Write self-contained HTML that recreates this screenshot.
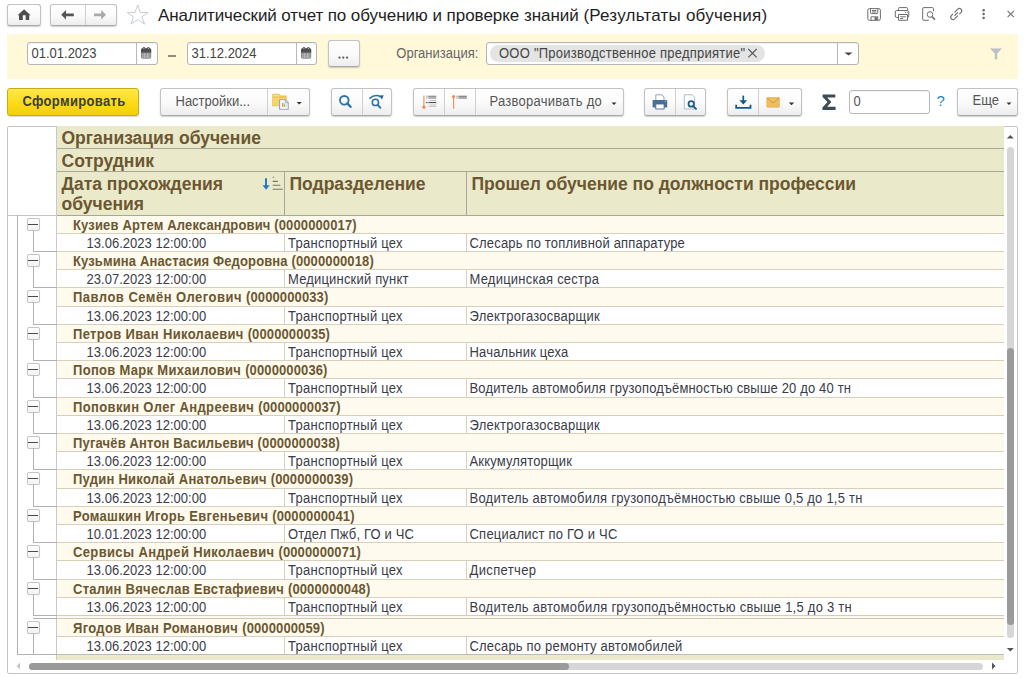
<!DOCTYPE html>
<html><head><meta charset="utf-8">
<style>
*{box-sizing:border-box;margin:0;padding:0}
html,body{width:1024px;height:679px;overflow:hidden;background:#fff;font-family:"Liberation Sans",sans-serif;color:#333;position:relative}
.a{position:absolute}
svg{position:absolute;overflow:visible}
.btn{position:absolute;border:1px solid #c2c2c2;border-bottom-color:#a9a9a9;border-radius:3px;background:linear-gradient(#ffffff 0%,#fbfbfb 50%,#ededed 100%);box-shadow:0 1px 1.5px rgba(0,0,0,.2)}
.dv{position:absolute;top:0;bottom:0;width:1px;background:#cfcfcf}
.inp{position:absolute;border:1px solid #b4b4b4;border-radius:3px;background:#fff;box-shadow:inset 0 1px 1px rgba(0,0,0,.06)}
.t{position:absolute;white-space:nowrap;line-height:1}
.t[style*="font-size:13px"]{transform:scaleY(1.08);transform-origin:0 60%}
#title{left:158px;top:7px;font-size:17px;color:#1e1e1e}
#band{left:7px;top:34px;width:1011px;height:45px;background:#fff9d9}
/* table */
#tbl{left:7px;top:126px;width:1011px;height:548px;border:1px solid #c4c4c4;border-radius:2px;background:#fff}
#hdr{left:57px;top:126px;width:947px;height:89px;background:#eae9ca}
.hl{position:absolute;height:1px;background:#a9a79a}
.ht{position:absolute;white-space:nowrap;font-weight:bold;font-size:17.5px;color:#6b5731;line-height:20px}
.gr{position:absolute;left:57px;width:947px;background:#fffaee;border-top:1px solid #d9cfbb}
.dr{position:absolute;left:57px;width:947px;background:#fff;border-top:1px solid #d9cfbb}
.gt{position:absolute;left:16px;top:2.6px;transform:scaleY(1.08);transform-origin:0 11px;white-space:nowrap;font-weight:bold;font-size:13px;letter-spacing:.12px;color:#6b5731;line-height:14px}
.dr span{position:absolute;top:3px;transform:scaleY(1.08);transform-origin:0 11px;white-space:nowrap;font-size:13px;letter-spacing:.12px;color:#3c3c46;line-height:14px}
.dr .c1{left:29.5px}
.dr .c2{left:231px}
.dr .c3{left:412.5px}
.dr:before{content:"";position:absolute;left:227px;top:-1px;bottom:0;width:1px;background:#d9cfbb}
.dr:after{content:"";position:absolute;left:409px;top:-1px;bottom:0;width:1px;background:#d9cfbb}
.tb{position:absolute;left:26.5px;width:13px;height:13px;border:1px solid #c4c4c4;border-radius:2px;background:linear-gradient(#fff,#f3f3f3);box-shadow:0 0 1px rgba(0,0,0,.15)}
.tb:after{content:"";position:absolute;left:0.5px;right:0.5px;top:5px;height:1px;background:#4a4a4a}
.tv{position:absolute;left:33px;width:1px;background:#b2b2b2}
.th{position:absolute;left:33px;width:24px;height:1px;background:#b2b2b2}
</style></head><body>
<!-- ===== top bar ===== -->
<div class="btn" style="left:7px;top:4px;width:34px;height:22px">
 <svg width="34" height="23" style="left:-1px;top:-5px"><path d="M17.1 9.3 L23.6 15.3 L22.2 15.3 L22.2 19.9 L18.7 19.9 L18.7 15.3 L15.8 15.3 L15.8 19.9 L12 19.9 L12 15.3 L10.6 15.3 Z" fill="#4f4f4f"/></svg>
</div>
<div class="btn" style="left:50px;top:4px;width:67px;height:22px">
 <div class="dv" style="left:33.5px"></div>
 <svg width="67" height="23" style="left:-1px;top:-5px"><path d="M11.2 14.8 L16 10.1 L16 13.5 L23.8 13.5 L23.8 16.2 L16 16.2 L16 19.5 Z" fill="#555"/><path d="M56 14.8 L51.2 10.1 L51.2 13.5 L44 13.5 L44 16.2 L51.2 16.2 L51.2 19.5 Z" fill="#aaa"/></svg>
</div>
<svg width="24" height="24" style="left:126px;top:3px"><path d="M11.7 1.9 L14.3 9.4 L22.1 9.4 L15.9 13.9 L18.6 21.1 L11.7 16.6 L4.9 21.1 L7.4 13.9 L1.3 9.4 L9 9.4 Z" fill="none" stroke="#c5c9ce" stroke-width="0.95" stroke-linejoin="miter"/></svg>
<div class="t" id="title"><span style="letter-spacing:-0.11px">Аналитический отчет по </span><span style="letter-spacing:-0.04px">обучению и проверке знаний </span><span style="letter-spacing:0.22px">(Результаты обучения)</span></div>

<!-- top right icons -->
<svg width="160" height="30" style="left:862px;top:0">
 <g fill="none" stroke="#6e6e6e" stroke-width="1">
  <rect x="5.8" y="8.6" width="12.6" height="11.7" rx="1.6"/>
  <path d="M8.5 8.6 V12.8 Q8.5 13.6 9.3 13.6 H15 Q15.8 13.6 15.8 12.8 V8.6"/>
  <path d="M10 10.5 H14.4 M10 12 H14.4"/>
  <path d="M9 20.3 V16.8 H15.8 V20.3"/>
 </g>
 <rect x="12.5" y="17.2" width="2.8" height="3" fill="#6e6e6e"/>
 <g fill="none" stroke="#6e6e6e" stroke-width="1">
  <path d="M36.5 10.5 V8.4 Q36.5 7.6 37.3 7.6 H44.7 Q45.5 7.6 45.5 8.4 V10.5"/>
  <path d="M36.5 17.5 H34.8 Q33.3 17.5 33.3 16 V12 Q33.3 10.5 34.8 10.5 H45.3 Q46.8 10.5 46.8 12 V16 Q46.8 17.5 45.3 17.5 H45.5"/>
  <path d="M36.5 20.3 V14.5 H45.5 V20.3 Z"/>
  <path d="M38.2 16.8 H43.8 M38.2 18.6 H41.2"/>
 </g>
 <path d="M42.8 12.3 H44 M44.8 12.3 H45.8" stroke="#6e6e6e" stroke-width="1"/>
 <g fill="none" stroke="#6e6e6e" stroke-width="1">
  <path d="M66.8 20.3 H61.8 Q60.7 20.3 60.7 19.2 V8.7 Q60.7 7.6 61.8 7.6 H70.4 Q71.5 7.6 71.5 8.7 V11.2"/>
  <circle cx="68" cy="14.5" r="2.8"/>
  <path d="M70 16.6 L73 19.6" stroke-width="1.5"/>
 </g>
 <g fill="none" stroke="#6e6e6e" stroke-width="1.15" stroke-linecap="round">
  <path d="M92.79 12.16 L95.83 9.12 A2.3 2.3 0 0 1 99.08 12.37 L97.66 13.79"/>
  <path d="M95.61 15.84 L92.57 18.88 A2.3 2.3 0 0 1 89.32 15.63 L90.74 14.21"/>
  <path d="M92.79 15.41 L95.61 12.59"/>
 </g>
 <circle cx="121.6" cy="10.3" r="1.25" fill="#666"/><circle cx="121.6" cy="14.1" r="1.25" fill="#666"/><circle cx="121.6" cy="17.9" r="1.25" fill="#666"/>
 <path d="M145.6 11 L151.9 17.1 M151.9 11 L145.6 17.1" stroke="#777" stroke-width="1.1"/>
</svg>

<!-- ===== filter band ===== -->
<div class="a" id="band"></div>
<div class="inp" style="left:27px;top:42px;width:131px;height:23px">
 <div class="dv" style="left:108px;background:#b9b9b9"></div>
 <div class="t" style="left:3.5px;top:3.5px;font-size:13px;color:#444">01.01.2023</div>
 <svg width="20" height="20" style="left:112.4px;top:3px"><rect x="1" y="2.2" width="10.2" height="10.6" rx="1.8" fill="#8c8c8c"/><path d="M1 6.4 V4 Q1 2.2 2.8 2.2 H9.4 Q11.2 2.2 11.2 4 V6.4 Z" fill="#505050"/><circle cx="3.9" cy="2.3" r="1.3" fill="#505050"/><circle cx="8.3" cy="2.3" r="1.3" fill="#505050"/><path d="M2 8.8 H10.2 M2 10.9 H10.2 M4.4 7 V12.4 M7.8 7 V12.4" stroke="#d0d0d0" stroke-width=".6"/><path d="M3.9 1.6 V3 M8.3 1.6 V3" stroke="#e0e0e0" stroke-width=".7"/></svg>
</div>
<div class="a" style="left:168px;top:55px;width:8px;height:2px;background:#8f8d7c"></div>
<div class="inp" style="left:187px;top:42px;width:130px;height:23px">
 <div class="dv" style="left:108px;background:#b9b9b9"></div>
 <div class="t" style="left:3.5px;top:3.5px;font-size:13px;color:#444">31.12.2024</div>
 <svg width="20" height="20" style="left:112.4px;top:3px"><rect x="1" y="2.2" width="10.2" height="10.6" rx="1.8" fill="#8c8c8c"/><path d="M1 6.4 V4 Q1 2.2 2.8 2.2 H9.4 Q11.2 2.2 11.2 4 V6.4 Z" fill="#505050"/><circle cx="3.9" cy="2.3" r="1.3" fill="#505050"/><circle cx="8.3" cy="2.3" r="1.3" fill="#505050"/><path d="M2 8.8 H10.2 M2 10.9 H10.2 M4.4 7 V12.4 M7.8 7 V12.4" stroke="#d0d0d0" stroke-width=".6"/><path d="M3.9 1.6 V3 M8.3 1.6 V3" stroke="#e0e0e0" stroke-width=".7"/></svg>
</div>
<div class="btn" style="left:328px;top:40px;width:32px;height:27px">
 <svg width="31" height="27" style="left:-1px;top:-1px"><circle cx="11.5" cy="17.6" r="1.1" fill="#555"/><circle cx="15.3" cy="17.6" r="1.1" fill="#555"/><circle cx="19.1" cy="17.6" r="1.1" fill="#555"/></svg>
</div>
<div class="t" style="left:396.3px;top:46.5px;font-size:13px;color:#666">Организация:</div>
<div class="inp" style="left:486px;top:42px;width:373px;height:23px">
 <div class="a" style="left:3px;top:2.4px;width:275px;height:16.6px;border-radius:8.3px;background:#e4e4e4"></div>
 <div class="t" style="left:12px;top:4px;font-size:13px;letter-spacing:.24px;color:#444">ООО "Производственное предприятие"</div>
 <svg width="12" height="12" style="left:260.2px;top:4px"><path d="M1.3 2 L9.7 10.3 M9.7 2 L1.3 10.3" stroke="#555" stroke-width="1.1"/></svg>
 <div class="dv" style="left:350px;background:#b9b9b9"></div>
 <svg width="10" height="6" style="left:357px;top:9px"><path d="M0.5 0.5 H8.5 L4.5 3.5 Z" fill="#444"/></svg>
</div>
<svg width="14" height="14" style="left:989px;top:47px"><path d="M1 1.5 H13 L8.2 6.6 V11.6 Q8.2 12.6 7 12.6 Q5.8 12.6 5.8 11.6 V6.6 Z" fill="#b8c0c8"/></svg>

<!-- ===== toolbar ===== -->
<div class="a" style="left:7px;top:88px;width:132px;height:28px;border:1px solid #c9ab12;border-radius:3px;background:linear-gradient(#fee84b 0%,#fcdb16 55%,#f3cf0b 100%);box-shadow:0 1px 1px rgba(0,0,0,.15)">
 <div class="t" style="left:14.5px;top:5.5px;font-size:13px;font-weight:bold;letter-spacing:.33px;color:#3e3e3e">Сформировать</div>
</div>
<div class="btn" style="left:160px;top:88px;width:150px;height:28px">
 <div class="t" style="left:14.5px;top:5.5px;font-size:13px;color:#555">Настройки...</div>
 <div class="dv" style="left:105.5px"></div>
 <svg width="149" height="27" style="left:-1px;top:-1px">
  <path d="M112.2 7 Q112.2 5.7 113.5 5.7 H118.4 Q119.4 5.7 120 6.6 L120.6 7.6 H125.6 Q126.8 7.6 126.8 8.8 V18.2 H112.2 Z" fill="#eebf52"/>
  <path d="M112.8 9.6 H126.2 V17.6 H112.8 Z" fill="#f7d36c"/>
  <path d="M113 6.8 H119 L119.8 8.6 H113 Z" fill="#fbe18a"/>
  <path d="M119.6 11.8 H125.4 L128.2 14.6 V21.2 H119.6 Z" fill="#fff" stroke="#98a4b4" stroke-width="1.1"/>
  <path d="M125.2 11.8 V14.8 H128.2" fill="#dfe3ea" stroke="#98a4b4" stroke-width=".8"/>
  <path d="M122.8 19 V14.8" stroke="#ee6b6b" stroke-width="1.2"/><path d="M124.6 19 V15.6" stroke="#7fcf7f" stroke-width="1.2"/><path d="M126.1 19 V16.2" stroke="#bfe8b0" stroke-width=".9"/>
  <path d="M136.6 14 H141.8 L139.2 16.6 Z" fill="#333"/>
 </svg>
</div>
<div class="btn" style="left:331px;top:88px;width:61px;height:28px">
 <div class="dv" style="left:29.5px"></div>
 <svg width="61" height="27" style="left:-1px;top:-1px">
  <circle cx="13.3" cy="12.3" r="4.3" fill="none" stroke="#2c72ab" stroke-width="1.9"/>
  <path d="M16.3 15.4 L19.6 18.8" stroke="#2c72ab" stroke-width="2.3" stroke-linecap="round"/>
  <path d="M38.4 10.6 Q44.2 5.6 49.6 8.9" fill="none" stroke="#2c72ab" stroke-width="1.4"/>
  <path d="M48.2 7.4 L52.6 7.2 L51 11.6 Z" fill="#1d5f98"/>
  <circle cx="44.4" cy="14.4" r="3.1" fill="none" stroke="#2c72ab" stroke-width="1.6"/>
  <path d="M46.8 16.9 L49.4 19.8" stroke="#2c72ab" stroke-width="1.9" stroke-linecap="round"/>
 </svg>
</div>
<div class="btn" style="left:413px;top:88px;width:211px;height:28px">
 <div class="dv" style="left:30px"></div>
 <div class="dv" style="left:61px"></div>
 <svg width="70" height="27" style="left:-1px;top:-1px">
  <path d="M10.9 7.4 V19" stroke="#f58a4f" stroke-width="1.1"/><circle cx="10.9" cy="19.2" r="1.6" fill="#f58a4f"/>
  <path d="M13.5 8.2 H14.5 M15.3 8.2 H23.3 M13.5 10 H14.5 M15.3 10 H23.3" stroke="#707070" stroke-width="1.1"/>
  <path d="M15.5 12.5 H16.3 M17 12.5 H23.3" stroke="#b0b0b0" stroke-width=".8"/>
  <path d="M13 14.6 H14.6 M15.4 14.6 H23.3" stroke="#3b3b3b" stroke-width="1"/>
  <path d="M15.5 17 H16.3 M17 17 H23.3 M15.5 18.4 H23.3" stroke="#b8b8b8" stroke-width=".8"/>
  <path d="M40.6 9.4 V20.8" stroke="#f58a4f" stroke-width="1.1"/><circle cx="40.6" cy="8.6" r="1.6" fill="#f58a4f"/>
  <path d="M43.6 8.2 H44.6 M45.4 8.2 H53.8 M43.6 10 H44.6 M45.4 10 H53.8" stroke="#606060" stroke-width="1.1"/>
 </svg>
 <div class="t" style="left:75.5px;top:5.5px;font-size:13px;letter-spacing:.26px;color:#555">Разворачивать до</div>
 <svg width="10" height="6" style="left:197px;top:12.5px"><path d="M0.5 0.5 H5.5 L3 3 Z" fill="#333"/></svg>
</div>
<div class="btn" style="left:644px;top:88px;width:62px;height:28px">
 <div class="dv" style="left:30px"></div>
 <svg width="62" height="27" style="left:-1px;top:-1px">
  <path d="M11.8 6.8 H17.8 L20 9 V12.6 H11.8 Z" fill="#fff" stroke="#8a9bb0" stroke-width=".9"/>
  <path d="M8.6 12.4 Q8.6 12 9.2 12 H22.6 Q23.2 12 23.2 12.6 V19 Q23.2 19.4 22.6 19.4 H9.2 Q8.6 19.4 8.6 19 Z" fill="#4a6e94"/>
  <rect x="11.8" y="16" width="8.3" height="5" fill="#fff" stroke="#4a6e94" stroke-width=".9"/>
  <path d="M20.8 13.4 H22" stroke="#cfe" stroke-width=".7"/>
  <path d="M40.3 6.8 H48 L50.6 9.4 V21 H40.3 Z" fill="#fff" stroke="#a9b4c0" stroke-width=".9"/>
  <circle cx="47.2" cy="15.9" r="2.7" fill="#fff" stroke="#1c5d8c" stroke-width="1.8"/>
  <path d="M49.2 18.1 L52 20.9" stroke="#1c5d8c" stroke-width="2" stroke-linecap="round"/>
 </svg>
</div>
<div class="btn" style="left:727px;top:88px;width:75px;height:28px">
 <div class="dv" style="left:30px"></div>
 <svg width="75" height="27" style="left:-1px;top:-1px">
  <path d="M16.3 7.6 V13" stroke="#0f5a8c" stroke-width="1.7"/>
  <path d="M12.4 12.3 H20.2 L16.3 16.6 Z" fill="#0f5a8c"/>
  <path d="M9.2 16.8 V19.8 H23.5 V16.8" fill="none" stroke="#0f5a8c" stroke-width="1.8"/>
  <rect x="39.8" y="9.6" width="12.6" height="9.6" rx="1" fill="#f0c060" stroke="#d9a640" stroke-width=".6"/>
  <path d="M39.9 9.8 L46.1 15 L52.3 9.8" fill="none" stroke="#c8913a" stroke-width=".9"/>
  <path d="M39.9 19.1 L44.6 14 M52.3 19.1 L47.6 14" fill="none" stroke="#e8b050" stroke-width=".6"/>
  <path d="M61.8 14.6 H67.2 L64.5 17.2 Z" fill="#333"/>
 </svg>
</div>
<svg width="16" height="18" style="left:821px;top:93px"><path d="M1.6 1.6 H14.3 V4.4 H6.1 L10.4 9.1 L6.1 13.8 H14.6 V16.9 H1.4 V14.6 L6.5 9.1 L1.6 3.9 Z" fill="#3d4b59"/></svg>
<div class="inp" style="left:849px;top:90px;width:81px;height:24px;border-color:#b9b9b9">
 <div class="t" style="left:3.5px;top:3.5px;font-size:13px;color:#555">0</div>
</div>
<div class="t" style="left:936.5px;top:93px;font-size:15px;color:#2d82c8">?</div>
<div class="btn" style="left:957px;top:88px;width:61px;height:28px">
 <div class="t" style="left:14.5px;top:5px;font-size:13px;color:#555">Еще</div>
 <svg width="10" height="6" style="left:47.5px;top:12.5px"><path d="M0.5 0.5 H5.5 L3 3 Z" fill="#333"/></svg>
</div>

<!-- ===== table ===== -->
<div class="a" id="tbl"></div>
<div class="a" id="hdr"></div>
<div class="hl" style="left:57px;top:148px;width:947px"></div>
<div class="hl" style="left:57px;top:171px;width:947px"></div>
<div class="a" style="left:284px;top:171px;width:1px;height:44px;background:#a9a79a"></div>
<div class="a" style="left:466px;top:171px;width:1px;height:44px;background:#a9a79a"></div>
<div class="ht" style="left:61.5px;top:128px">Организация обучение</div>
<div class="ht" style="left:61.5px;top:151px">Сотрудник</div>
<div class="ht" style="left:61.5px;top:173.5px">Дата прохождения<br>обучения</div>
<div class="ht" style="left:289.5px;top:173.5px">Подразделение</div>
<div class="ht" style="left:471.5px;top:173.5px">Прошел обучение по должности профессии</div>
<svg width="24" height="18" style="left:261px;top:175px">
 <path d="M5 3.2 V10.7" stroke="#1f78c1" stroke-width="1.9"/><path d="M1.6 10.3 H8.6 L5.1 14.8 Z" fill="#1f78c1"/>
 <path d="M11.7 2.2 H13.2 M11.7 6.4 H16.8 M11.7 10.3 H19.3 M11.7 14.2 H21.8" stroke="#78776a" stroke-width="1.1"/>
</svg>

<div class="gr" style="top:215.0px;height:18.0px"><span class="gt"><span style="letter-spacing:0.164px">Кузиев Артем Александрович </span>(0000000017)</span></div>
<div class="dr" style="top:233.0px;height:18.0px"><span class="c1" style="letter-spacing:.025px">13.06.2023 12:00:00</span><span class="c2" style="letter-spacing:0.26px">Транспортный цех</span><span class="c3" style="letter-spacing:0.172px">Слесарь по топливной аппаратуре</span></div>
<div class="gr" style="top:251.0px;height:18.0px"><span class="gt"><span style="letter-spacing:0.134px">Кузьмина Анастасия Федоровна </span>(0000000018)</span></div>
<div class="dr" style="top:269.0px;height:18.0px"><span class="c1" style="letter-spacing:.025px">23.07.2023 12:00:00</span><span class="c2" style="letter-spacing:0.18px">Медицинский пункт</span><span class="c3" style="letter-spacing:0.220px">Медицинская сестра</span></div>
<div class="gr" style="top:287.0px;height:19.0px"><span class="gt"><span style="letter-spacing:0.484px">Павлов Семён Олегович </span>(0000000033)</span></div>
<div class="dr" style="top:306.0px;height:18.0px"><span class="c1" style="letter-spacing:.025px">13.06.2023 12:00:00</span><span class="c2" style="letter-spacing:0.26px">Транспортный цех</span><span class="c3" style="letter-spacing:0.253px">Электрогазосварщик</span></div>
<div class="gr" style="top:324.0px;height:18.0px"><span class="gt"><span style="letter-spacing:0.320px">Петров Иван Николаевич </span>(0000000035)</span></div>
<div class="dr" style="top:342.0px;height:18.0px"><span class="c1" style="letter-spacing:.025px">13.06.2023 12:00:00</span><span class="c2" style="letter-spacing:0.26px">Транспортный цех</span><span class="c3" style="letter-spacing:0.191px">Начальник цеха</span></div>
<div class="gr" style="top:360.0px;height:18.0px"><span class="gt"><span style="letter-spacing:0.306px">Попов Марк Михаилович </span>(0000000036)</span></div>
<div class="dr" style="top:378.0px;height:19.0px"><span class="c1" style="letter-spacing:.025px">13.06.2023 12:00:00</span><span class="c2" style="letter-spacing:0.26px">Транспортный цех</span><span class="c3" style="letter-spacing:0.162px">Водитель автомобиля грузоподъёмностью свыше 20 до 40 тн</span></div>
<div class="gr" style="top:397.0px;height:18.0px"><span class="gt"><span style="letter-spacing:0.370px">Поповкин Олег Андреевич </span>(0000000037)</span></div>
<div class="dr" style="top:415.0px;height:18.0px"><span class="c1" style="letter-spacing:.025px">13.06.2023 12:00:00</span><span class="c2" style="letter-spacing:0.26px">Транспортный цех</span><span class="c3" style="letter-spacing:0.253px">Электрогазосварщик</span></div>
<div class="gr" style="top:433.0px;height:18.0px"><span class="gt"><span style="letter-spacing:0.160px">Пугачёв Антон Васильевич </span>(0000000038)</span></div>
<div class="dr" style="top:451.0px;height:18.0px"><span class="c1" style="letter-spacing:.025px">13.06.2023 12:00:00</span><span class="c2" style="letter-spacing:0.26px">Транспортный цех</span><span class="c3" style="letter-spacing:0.156px">Аккумуляторщик</span></div>
<div class="gr" style="top:469.0px;height:19.0px"><span class="gt"><span style="letter-spacing:0.247px">Пудин Николай Анатольевич </span>(0000000039)</span></div>
<div class="dr" style="top:488.0px;height:18.0px"><span class="c1" style="letter-spacing:.025px">13.06.2023 12:00:00</span><span class="c2" style="letter-spacing:0.26px">Транспортный цех</span><span class="c3" style="letter-spacing:0.231px">Водитель автомобиля грузоподъёмностью свыше 0,5 до 1,5 тн</span></div>
<div class="gr" style="top:506.0px;height:18.0px"><span class="gt"><span style="letter-spacing:0.308px">Ромашкин Игорь Евгеньевич </span>(0000000041)</span></div>
<div class="dr" style="top:524.0px;height:18.0px"><span class="c1" style="letter-spacing:.025px">10.01.2023 12:00:00</span><span class="c2" style="letter-spacing:0.17px">Отдел Пжб, ГО и ЧС</span><span class="c3" style="letter-spacing:0.225px">Специалист по ГО и ЧС</span></div>
<div class="gr" style="top:542.0px;height:18.0px"><span class="gt"><span style="letter-spacing:0.366px">Сервисы Андрей Николаевич </span>(0000000071)</span></div>
<div class="dr" style="top:560.0px;height:19.0px"><span class="c1" style="letter-spacing:.025px">13.06.2023 12:00:00</span><span class="c2" style="letter-spacing:0.26px">Транспортный цех</span><span class="c3" style="letter-spacing:0.376px">Диспетчер</span></div>
<div class="gr" style="top:579.0px;height:18.0px"><span class="gt"><span style="letter-spacing:0.266px">Сталин Вячеслав Евстафиевич </span>(0000000048)</span></div>
<div class="dr" style="top:597.0px;height:18.0px"><span class="c1" style="letter-spacing:.025px">13.06.2023 12:00:00</span><span class="c2" style="letter-spacing:0.26px">Транспортный цех</span><span class="c3" style="letter-spacing:0.242px">Водитель автомобиля грузоподъёмностью свыше 1,5 до 3 тн</span></div>
<div class="gr" style="top:618.0px;height:18.0px"><span class="gt"><span style="letter-spacing:0.338px">Ягодов Иван Романович </span>(0000000059)</span></div>
<div class="dr" style="top:636.0px;height:18.0px"><span class="c1" style="letter-spacing:.025px">13.06.2023 12:00:00</span><span class="c2" style="letter-spacing:0.26px">Транспортный цех</span><span class="c3" style="letter-spacing:0.193px">Слесарь по ремонту автомобилей</span></div>
<div class="hl" style="left:57px;top:215px;width:947px"></div>
<div class="a" style="left:8px;top:215px;width:49px;height:1px;background:#c4c4c4"></div>
<div class="a" style="left:57px;top:615px;width:947px;height:4px;background:#fbf8f1;border-top:1px solid #d6ccb6;border-bottom:1px solid #d2c8b2"></div>
<div class="a" style="left:57px;top:654px;width:947px;height:1px;background:#bcbcbc"></div>
<div class="a" style="left:57px;top:655px;width:947px;height:5px;background:#eae9ca"></div>
<!-- tree column -->
<div class="a" style="left:56px;top:126px;width:1px;height:534px;background:#c9c9c9"></div>
<div class="a" style="left:17px;top:215px;width:1px;height:440px;background:#b2b2b2"></div>
<div class="a" style="left:17px;top:654px;width:40px;height:1px;background:#b2b2b2"></div>
<div class="tb" style="top:218.0px"></div>
<div class="tv" style="top:230.0px;height:21.0px"></div>
<div class="th" style="top:251.0px"></div>
<div class="tb" style="top:254.0px"></div>
<div class="tv" style="top:266.0px;height:21.0px"></div>
<div class="th" style="top:287.0px"></div>
<div class="tb" style="top:290.0px"></div>
<div class="tv" style="top:302.0px;height:22.0px"></div>
<div class="th" style="top:324.0px"></div>
<div class="tb" style="top:327.0px"></div>
<div class="tv" style="top:339.0px;height:21.0px"></div>
<div class="th" style="top:360.0px"></div>
<div class="tb" style="top:363.0px"></div>
<div class="tv" style="top:375.0px;height:22.0px"></div>
<div class="th" style="top:397.0px"></div>
<div class="tb" style="top:400.0px"></div>
<div class="tv" style="top:412.0px;height:21.0px"></div>
<div class="th" style="top:433.0px"></div>
<div class="tb" style="top:436.0px"></div>
<div class="tv" style="top:448.0px;height:21.0px"></div>
<div class="th" style="top:469.0px"></div>
<div class="tb" style="top:472.0px"></div>
<div class="tv" style="top:484.0px;height:22.0px"></div>
<div class="th" style="top:506.0px"></div>
<div class="tb" style="top:509.0px"></div>
<div class="tv" style="top:521.0px;height:21.0px"></div>
<div class="th" style="top:542.0px"></div>
<div class="tb" style="top:545.0px"></div>
<div class="tv" style="top:557.0px;height:22.0px"></div>
<div class="th" style="top:579.0px"></div>
<div class="tb" style="top:582.0px"></div>
<div class="tv" style="top:594.0px;height:21.0px"></div>
<div class="th" style="top:615.0px"></div>
<div class="tb" style="top:621.0px"></div>
<div class="tv" style="top:633.0px;height:21.0px"></div>
<div class="a" style="left:33px;top:618px;width:24px;height:1px;background:#b2b2b2"></div>
<!-- v scrollbar -->
<svg width="10" height="6" style="left:1006px;top:134px"><path d="M0.8 4.6 H7.8 L4.3 1 Z" fill="#555"/></svg>
<div class="a" style="left:1007px;top:147px;width:7px;height:491px;border-radius:3.5px;background:#d6d6d6"></div>
<div class="a" style="left:1007px;top:348px;width:7px;height:276.5px;border-radius:3.5px;background:#9a9a9a"></div>
<svg width="10" height="6" style="left:1006px;top:647px"><path d="M0.8 1 H7.8 L4.3 4.6 Z" fill="#555"/></svg>
<!-- h scrollbar -->
<svg width="8" height="10" style="left:15px;top:661px"><path d="M5 1.5 V8.5 L1.5 5 Z" fill="#c8c8c8"/></svg>
<div class="a" style="left:29px;top:663px;width:954px;height:7px;border-radius:3.5px;background:#d6d6d6"></div>
<div class="a" style="left:29px;top:663px;width:540px;height:7px;border-radius:3.5px;background:#9a9a9a"></div>
<svg width="8" height="10" style="left:990px;top:661px"><path d="M2 1.5 V8.5 L5.5 5 Z" fill="#555"/></svg>
</body></html>
